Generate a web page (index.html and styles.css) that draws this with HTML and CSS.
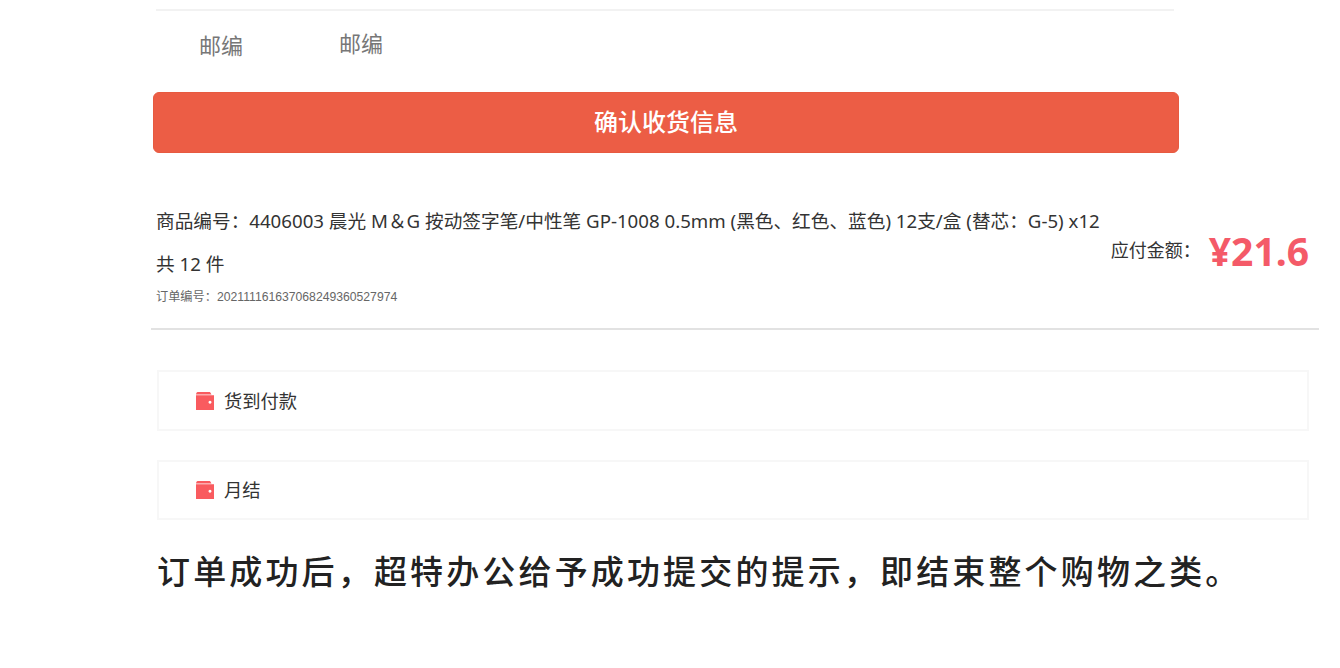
FILE: index.html
```html
<!DOCTYPE html>
<html lang="zh-CN">
    <head>
        <meta charset="UTF-8" />
        <meta name="viewport" content="width=device-width, initial-scale=1" />
        <title>确认订单</title>
        <link rel="stylesheet" href="styles.css">
    </head>
    <body>
        <div class="container">
            <div class="zip-row">
                <span class="zip-label">邮编</span>
                <span class="zip-value">邮编</span>
            </div>
            <button class="confirm-btn" type="button">确认收货信息</button>
            <div class="order-info">
                <div class="order-text">
                    <p class="goods">商品编号：4406003 晨光 M＆G 按动签字笔/中性笔 GP-1008 0.5mm (黑色、红色、蓝色) 12支/盒 (替芯：G-5) x12</p>
                    <p class="count">共 12 件</p>
                    <p class="order-no">订单编号：202111161637068249360527974</p>
                </div>
                <div class="total">
                    <span class="total-label">应付金额：</span>
                    <span class="total-price">¥21.6</span>
                </div>
            </div>
            <div class="pay-item">
                <svg class="wallet" viewBox="0 0 18 18"><path d="M1.500 0H14L15.500 2.400H0Q0.200 0.400 1.500 0Z"/><path d="M0 3.200H18V18H0ZM14 8.800a1.500 1.500 0 1 0 0.010 0Z" fill-rule="evenodd"/></svg>
                <span>货到付款</span>
            </div>
            <div class="pay-item pay-item-last">
                <svg class="wallet" viewBox="0 0 18 18"><path d="M1.500 0H14L15.500 2.400H0Q0.200 0.400 1.500 0Z"/><path d="M0 3.200H18V18H0ZM14 8.800a1.500 1.500 0 1 0 0.010 0Z" fill-rule="evenodd"/></svg>
                <span>月结</span>
            </div>
            <h2>订单成功后，超特办公给予成功提交的提示，即结束整个购物之类。</h2>
        </div>
    </body>
</html>
```

FILE: styles.css
```css
/* Reset básico */
* {
    box-sizing: border-box;
    margin: 0;
    padding: 0;
}
body {
    font-family: "Noto Sans", "Noto Sans CJK SC", sans-serif;
    background: #fff;
    color: #333;
    height: 668px;
    overflow: hidden;
}
.container {
    width: 1340px;
    padding: 9px 0 0 151px;
}
.zip-row {
    width: 1018px;
    margin-left: 5px;
    height: 83px;
    border-top: 2px solid #f2f2f2;
    display: flex;
    color: #777;
    font-size: 22px;
    line-height: 30px;
}
.zip-label {
    width: 183px;
    padding: 19px 0 0 43px;
}
.zip-value {
    padding-top: 17px;
}
.confirm-btn {
    display: block;
    width: 1026px;
    height: 61px;
    margin-left: 2px;
    padding-bottom: 4px;
    border: 1px solid #e75a40;
    border-radius: 6px;
    background: #ec5d45;
    color: #fff;
    font-family: inherit;
    font-size: 24px;
    font-weight: 500;
}
.order-info {
    width: 1168px;
    height: 177px;
    padding: 47px 10px 0 5px;
    border-bottom: 2px solid #e2e2e2;
    display: flex;
    justify-content: space-between;
}
.goods {
    font-size: 18.67px;
    line-height: 42px;
    height: 43px;
    white-space: nowrap;
    color: #333;
}
.count {
    font-size: 18.67px;
    line-height: 42px;
    height: 42px;
}
.order-no {
    font-family: "Liberation Sans", "Noto Sans CJK SC", sans-serif;
    font-size: 12.2px;
    line-height: 24px;
    color: #666;
}
.total {
    display: flex;
    align-items: center;
    height: 58px;
    margin-top: 21px;
}
.total-label {
    font-size: 18px;
    margin: 0 8px 3px 0;
}
.total-price {
    font-size: 39px;
    font-weight: 700;
    color: #f45a68;
}
.pay-item {
    width: 1152px;
    height: 61px;
    margin: 40px 0 0 6px;
    padding: 0 0 2px 37px;
    border: 2px solid #f7f7f7;
    display: flex;
    align-items: center;
    font-size: 18.3px;
    gap: 10px;
}
.pay-item-last {
    height: 60px;
    margin-top: 29px;
}
.wallet {
    width: 18px;
    height: 18px;
    margin-top: 2px;
    fill: #f95b5f;
}
h2 {
    margin: 28px 0 0 6px;
    font-size: 33px;
    font-weight: 500;
    letter-spacing: 3.15px;
    line-height: 48px;
    color: #222;
    white-space: nowrap;
}
```
